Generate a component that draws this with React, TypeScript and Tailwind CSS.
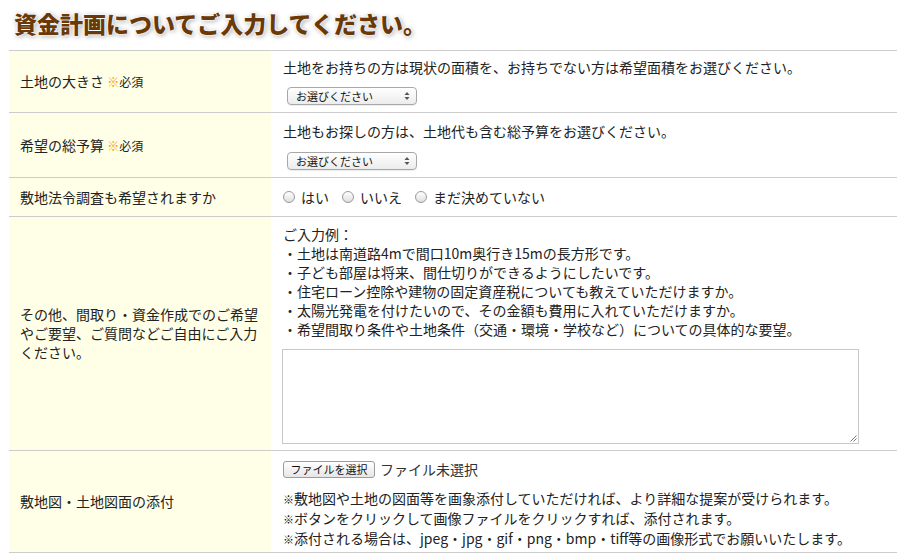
import React from "react";

const font = "font-['Hiragino_Kaku_Gothic_ProN','Noto_Sans_CJK_JP',sans-serif]";

function SelectBox() {
  return (
    <div className="ml-[4px] flex h-[18px] w-[130px] items-center justify-between rounded-[4px] border border-[#a8a8a8] bg-gradient-to-b from-white to-[#ececec] pl-[8px] pr-[6px] shadow-[0_1px_1px_rgba(0,0,0,0.08)]">
      <span className="text-[11px] leading-none text-[#111]">お選びください</span>
      <svg width="6" height="10" viewBox="0 0 6 10" className="text-[#555]">
        <path d="M3 1 L5.5 4 H0.5 Z" fill="currentColor" />
        <path d="M3 9 L5.5 6 H0.5 Z" fill="currentColor" />
      </svg>
    </div>
  );
}

function Radio({ label }: { label: string }) {
  return (
    <span className="flex items-center">
      <span className="inline-block h-[12px] w-[12px] rounded-full border border-[#9a9a9a] bg-gradient-to-b from-white to-[#dedede]" />
      <span className="ml-[6px]">{label}</span>
    </span>
  );
}

function Row({ label, children }: { label: React.ReactNode; children: React.ReactNode }) {
  return (
    <div className="flex border-b border-[#cccccc]">
      <div className="flex w-[262px] shrink-0 items-center bg-[#fffee6] pl-[11px] leading-[19px]">
        <div>{label}</div>
      </div>
      <div className="flex-1 pl-[12px] leading-[19px]">{children}</div>
    </div>
  );
}

function Required() {
  return (
    <>
      {" "}
      <span className="text-[12px] font-black leading-none text-[#f59a00]">※</span>
      <span className="text-[12px]">必須</span>
    </>
  );
}

function Mark() {
  return <span className="text-[11px] font-black text-[#111]">※</span>;
}

export default function App() {
  return (
    <div className={`${font} min-h-[558px] w-[908px] bg-white text-[14px] text-[#222]`}>
      <div className="px-[9px]">
        <h1 className="box-content h-[30px] pl-[5px] pt-[8px] text-[23px] font-black leading-[30px] text-[#6a3908] [text-shadow:0_0_2px_#fff,0_0_2px_#fff,0_0_3px_#fff,1px_1px_5px_rgba(0,0,0,0.45)]">
          資金計画についてご入力してください。
        </h1>
        <div className="mt-[12px] w-[888px] border-t border-[#cccccc]">
          <Row
            label={
              <span>
                土地の大きさ
                <Required />
              </span>
            }
          >
            <div className="pt-[7px] pb-[7px]">
              <div>土地をお持ちの方は現状の面積を、お持ちでない方は希望面積をお選びください。</div>
              <div className="mt-[10px]">
                <SelectBox />
              </div>
            </div>
          </Row>
          <Row
            label={
              <span>
                希望の総予算
                <Required />
              </span>
            }
          >
            <div className="pt-[9px] pb-[7px]">
              <div>土地もお探しの方は、土地代も含む総予算をお選びください。</div>
              <div className="mt-[11px]">
                <SelectBox />
              </div>
            </div>
          </Row>
          <Row label="敷地法令調査も希望されますか">
            <div className="flex h-[38px] items-center gap-[13px]">
              <Radio label="はい" />
              <Radio label="いいえ" />
              <Radio label="まだ決めていない" />
            </div>
          </Row>
          <Row
            label={
              <span>
                その他、間取り・資金作成でのご希望
                <br />
                やご要望、ご質問などご自由にご入力
                <br />
                ください。
              </span>
            }
          >
            <div className="pt-[8px] pb-[6px]">
              <div>ご入力例：</div>
              <div>・土地は南道路4mで間口10m奥行き15mの長方形です。</div>
              <div>・子ども部屋は将来、間仕切りができるようにしたいです。</div>
              <div>・住宅ローン控除や建物の固定資産税についても教えていただけますか。</div>
              <div>・太陽光発電を付けたいので、その金額も費用に入れていただけますか。</div>
              <div>・希望間取り条件や土地条件（交通・環境・学校など）についての具体的な要望。</div>
              <div className="relative ml-[-1px] mt-[10px] h-[95px] w-[577px] border border-[#c8c8c8] bg-white">
                <svg width="7" height="7" viewBox="0 0 7 7" className="absolute bottom-[1px] right-[1px]">
                  <path d="M6.5 0.5 L0.5 6.5 M6.5 3.5 L3.5 6.5" stroke="#777" strokeWidth="1" />
                </svg>
              </div>
            </div>
          </Row>
          <Row label="敷地図・土地図面の添付">
            <div className="pt-[9px] pb-[3px]">
              <div className="flex items-center">
                <span className="flex h-[17px] w-[92px] items-center justify-center rounded-[3px] border border-[#9c9c9c] bg-gradient-to-b from-white to-[#e6e6e6] text-[11px] leading-none text-[#111]">
                  ファイルを選択
                </span>
                <span className="ml-[5px] text-[#333]">ファイル未選択</span>
              </div>
              <div className="mt-[10px]">
                <div>
                  <Mark />
                  敷地図や土地の図面等を画象添付していただければ、より詳細な提案が受けられます。
                </div>
                <div>
                  <Mark />
                  ボタンをクリックして画像ファイルをクリックすれば、添付されます。
                </div>
                <div>
                  <Mark />
                  添付される場合は、jpeg・jpg・gif・png・bmp・tiff等の画像形式でお願いいたします。
                </div>
              </div>
            </div>
          </Row>
        </div>
      </div>
    </div>
  );
}
